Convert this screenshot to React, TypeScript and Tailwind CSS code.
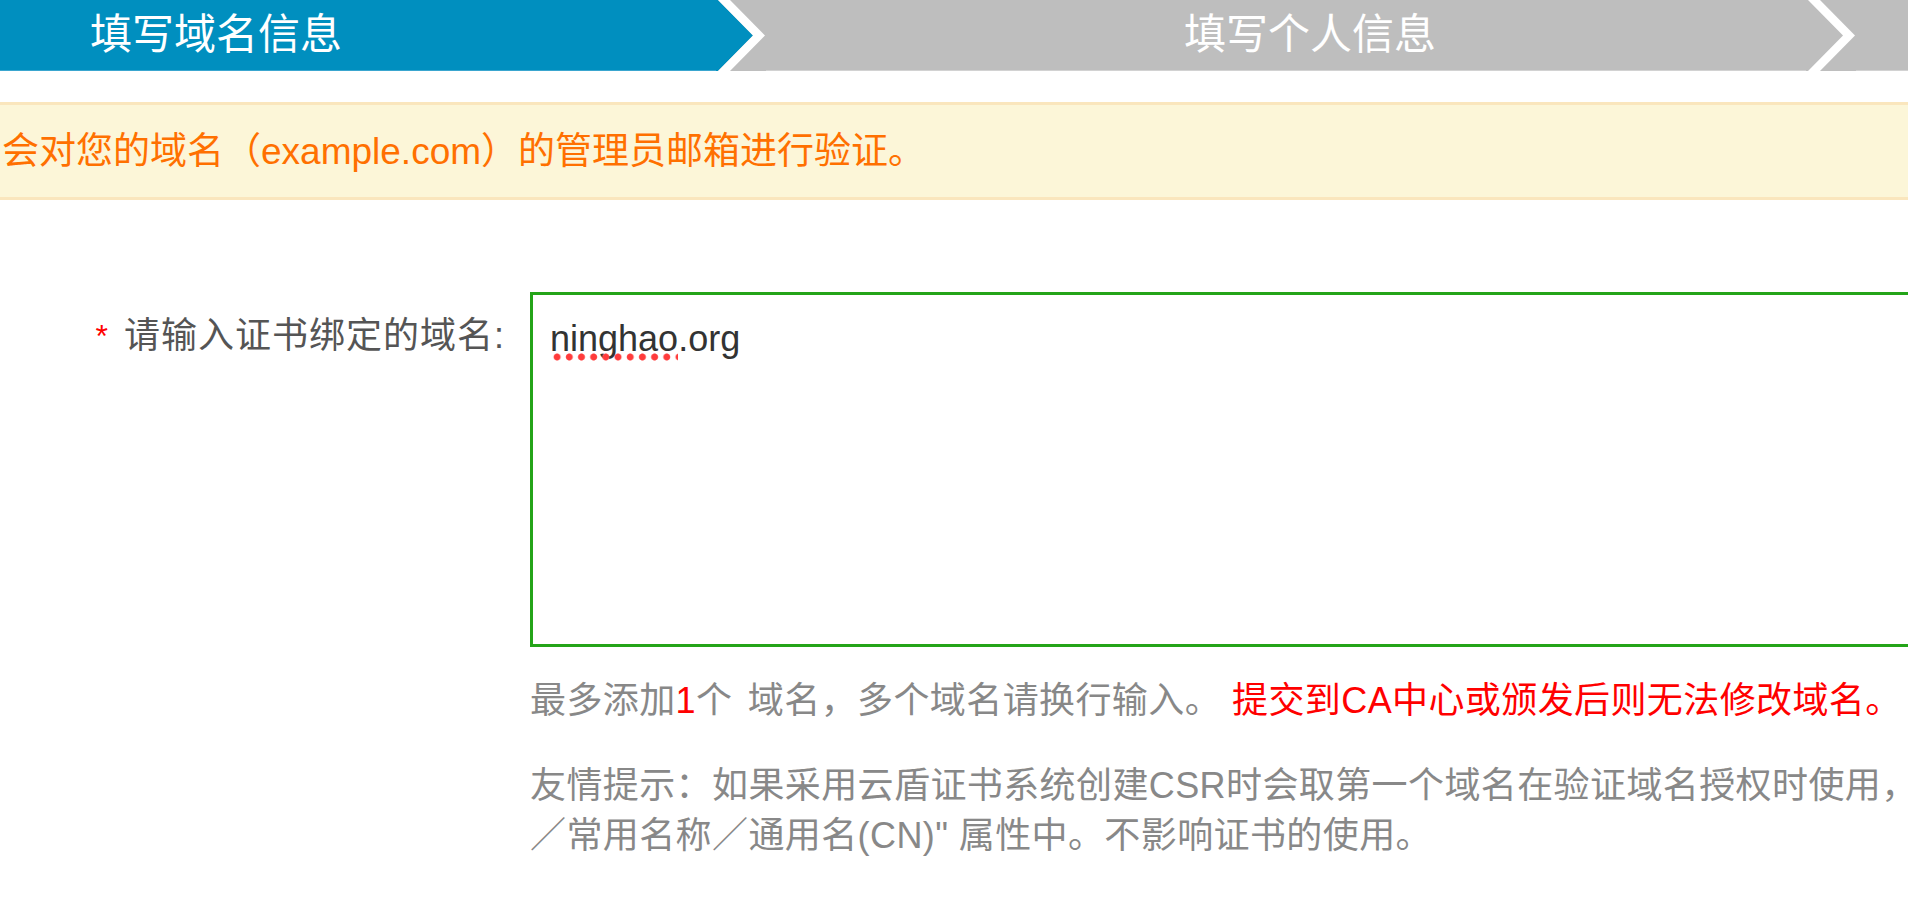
import React from "react";

const Chevron = ({ left, right }: { left: string; right: string }) => (
  <svg width="50" height="71" viewBox="0 0 50 71" className="block shrink-0">
    <rect x="0" y="0" width="50" height="71" fill={right} />
    <polygon points="0,0 2,0 37,35.5 2,71 0,71" fill={left} />
    <polygon points="2,0 14,0 49,35.5 14,71 2,71 37,35.5" fill="#ffffff" />
  </svg>
);

export default function App() {
  return (
    <div className="w-[1908px] h-[898px] overflow-hidden bg-white">
      <div className="w-[1908px] font-['Liberation_Sans','Noto_Sans_CJK_SC',sans-serif]">
        {/* Steps bar */}
        <div className="flex h-[71px]">
          <div className="w-[716px] shrink-0 bg-[#008fbf] border-b border-[#3aa6cf] flex items-center pl-[90px] text-white text-[42px] leading-none">
            填写域名信息
          </div>
          <Chevron left="#008fbf" right="#bebebe" />
          <div className="w-[1040px] shrink-0 bg-[#bebebe] border-b border-[#d2d2d2] flex items-center justify-center pl-[48px] text-white text-[42px] leading-none">
            填写个人信息
          </div>
          <Chevron left="#bebebe" right="#bebebe" />
          <div className="flex-1 bg-[#bebebe] border-b border-[#d2d2d2]" />
        </div>

        {/* Notice */}
        <div className="mt-[31px] h-[98px] border-y-[3px] border-[#fae6bd] bg-[#fcf6d8] flex items-center pl-[2px] text-[37px] text-[#ff7000] leading-none">
          会对您的域名（example.com）的管理员邮箱进行验证。
        </div>

        {/* Form row */}
        <div className="flex mt-[92px]">
          <div className="w-[530px] shrink-0 flex justify-end pr-[25px] pt-[19px] text-[36px] leading-[50px] text-[#555555] tracking-[1px]">
            <span className="text-[#ff0000] text-[32px] mr-[15px]">*</span>
            <span>请输入证书绑定的域名:</span>
          </div>
          <div className="flex-1 h-[355px] border-y-[3px] border-l-[3px] border-[#24a418] pl-[17px] pt-[23px] text-[36px] leading-[42px] text-[#333333]">
            <span className="relative">
              ninghao
              <span className="absolute left-[1px] right-0 top-[35px] h-[8px] bg-[radial-gradient(circle,#ff3b3b_2.8px,#ff7a7a_3.4px,transparent_3.9px)] bg-[length:12.2px_8px] bg-repeat-x" />
            </span>
            .org
          </div>
        </div>

        {/* Hints */}
        <div className="pl-[530px] text-[36px] leading-[50px] text-[#888888] tracking-[0.4px]">
          <div className="mt-[29px] whitespace-nowrap">
            最多添加<span className="text-[#ff0000]">1</span>
            <span className="mr-[5px]">个</span> 域名，多个域名请换行输入。
            <span className="text-[#ff0000] ml-[11px]">提交到CA中心或颁发后则无法修改域名。</span>
          </div>
          <div className="mt-[35px] whitespace-nowrap">
            友情提示：如果采用云盾证书系统创建CSR时会取第一个域名在验证域名授权时使用，
          </div>
          <div className="whitespace-nowrap">
            ／常用名称／通用名(CN)" 属性中。不影响证书的使用。
          </div>
        </div>
      </div>
    </div>
  );
}
